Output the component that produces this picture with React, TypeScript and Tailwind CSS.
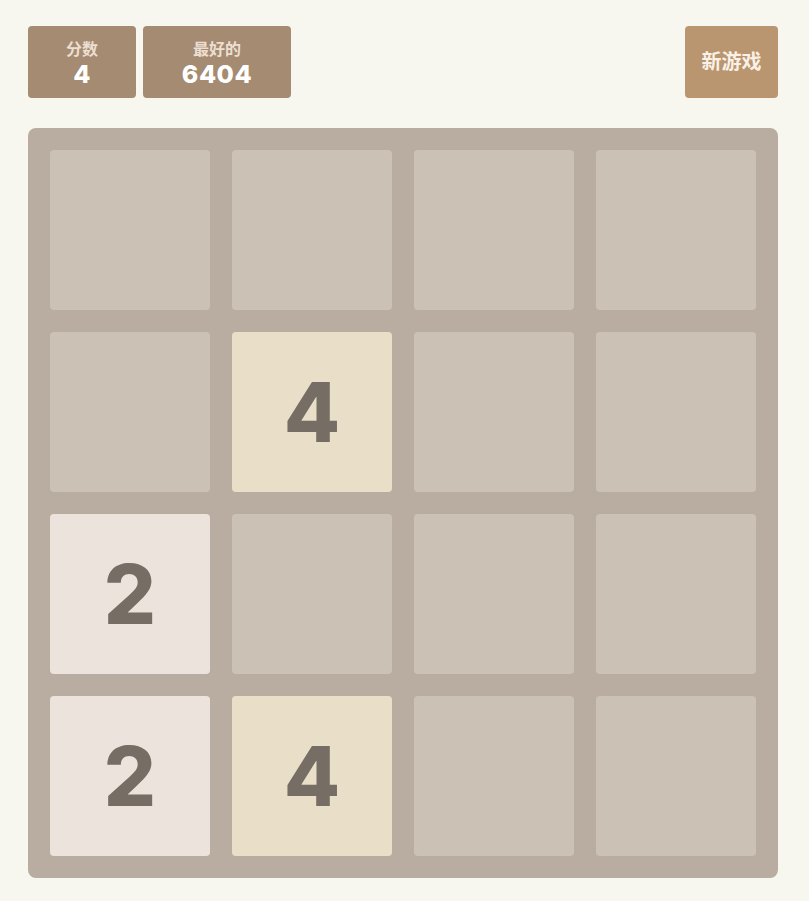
import React from "react";

const board: number[][] = [
  [0, 0, 0, 0],
  [0, 4, 0, 0],
  [2, 0, 0, 0],
  [2, 4, 0, 0],
];

const tileStyle: Record<number, string> = {
  0: "bg-[#cbc1b5]",
  2: "bg-[#ece4dc] text-[#766d65]",
  4: "bg-[#e9dfc8] text-[#766d65]",
};

const font = { fontFamily: "Inter, 'Noto Sans CJK SC', sans-serif" };

const ScoreBox = ({ label, value, width }: { label: string; value: string; width: string }) => (
  <div className={`${width} h-[72px] rounded-[4px] bg-[#a48b72] flex flex-col items-center pt-[13px]`}>
    <span className="text-[16px] leading-[21px] font-bold text-[#ecdfd1]">{label}</span>
    <span className="text-[25px] leading-[28px] font-extrabold text-white tracking-[0.5px]">{value}</span>
  </div>
);

export default function App() {
  return (
    <div className="min-h-[901px] w-full bg-[#f8f7ef] pt-[26px] px-[28px]" style={font}>
      <div className="w-[750px]">
        <div className="flex items-center">
          <div className="flex gap-[7px]">
            <ScoreBox label="分数" value="4" width="w-[108px]" />
            <ScoreBox label="最好的" value="6404" width="w-[148px]" />
          </div>
          <button className="ml-auto w-[93px] h-[72px] rounded-[4px] bg-[#b9966f] text-[20px] font-bold text-[#f9f1e8]">
            新游戏
          </button>
        </div>

        <div className="mt-[30px] w-[750px] h-[750px] rounded-[8px] bg-[#b9ada1] p-[22px] grid grid-cols-4 grid-rows-4 gap-[22px]">
          {board.flat().map((v, i) => (
            <div
              key={i}
              className={`rounded-[4px] flex items-center justify-center text-[82px] font-extrabold ${tileStyle[v]}`}
            >
              {v > 0 ? v : ""}
            </div>
          ))}
        </div>
      </div>
    </div>
  );
}
